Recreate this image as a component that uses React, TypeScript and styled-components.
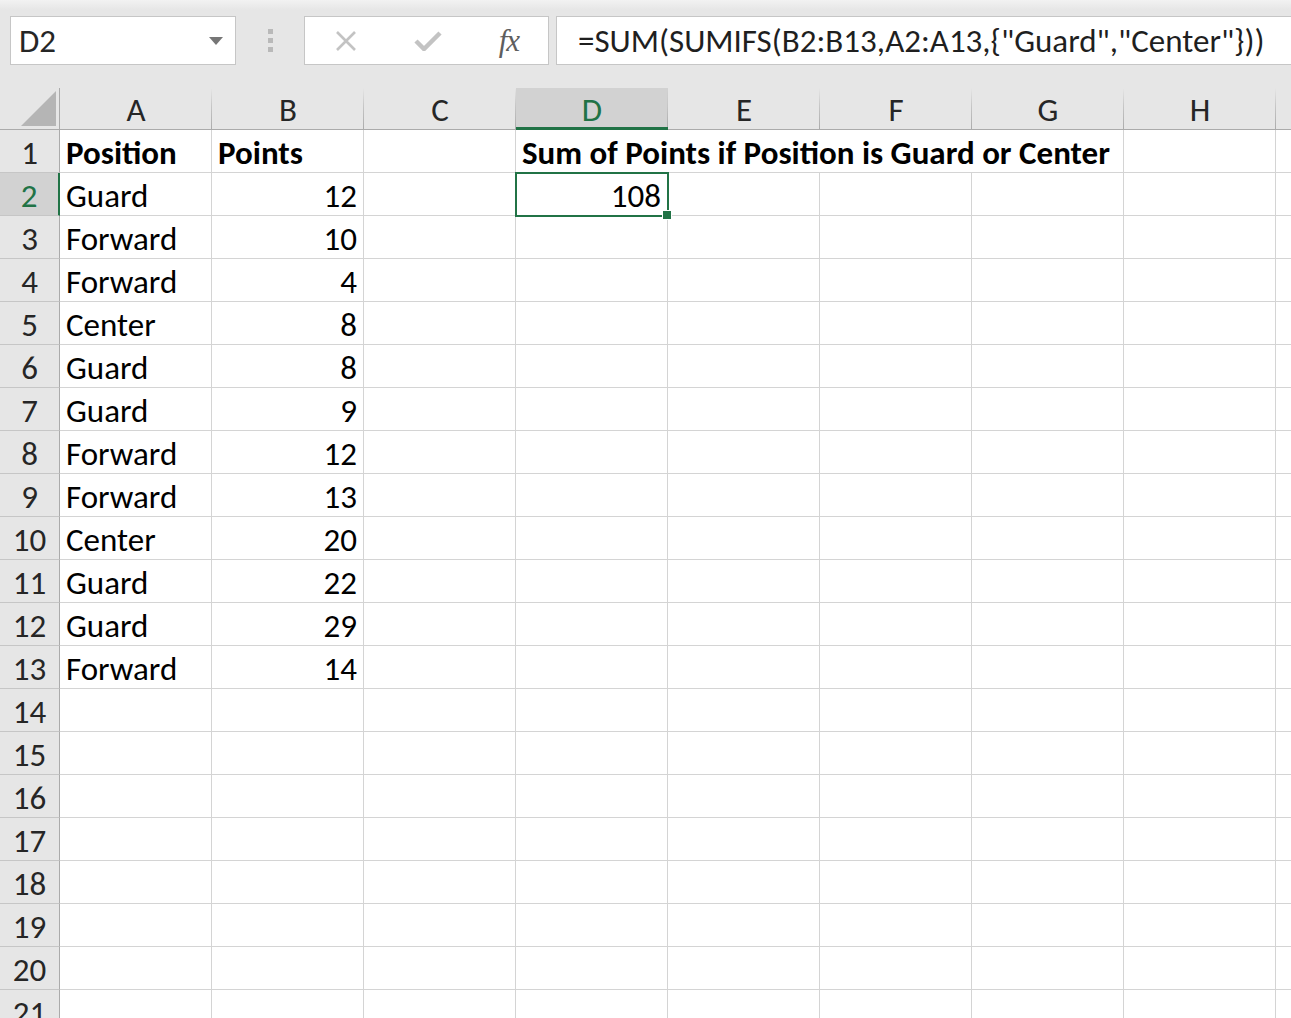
import React from "react";
import styled, { createGlobalStyle, css } from "styled-components";

const GlobalStyle = createGlobalStyle`
  html, body {
    margin: 0;
    padding: 0;
    background: #ffffff;
    overflow: hidden;
  }
  * { box-sizing: border-box; }
`;

const font = `"Carlito", "Lato", "Liberation Sans", sans-serif`;

const Page = styled.div`
  width: 1291px;
  height: 1018px;
  overflow: hidden;
  font-family: ${font};
  background: #e6e6e6;
`;

const FormulaBar = styled.div`
  height: 88px;
  display: flex;
  align-items: flex-start;
  padding: 16px 0 0 10px;
  background: linear-gradient(#f2f2f2 0px, #e6e6e6 10px);
`;

const Box = styled.div`
  height: 49px;
  background: #ffffff;
  border: 1px solid #c6c6c6;
  display: flex;
  align-items: center;
`;

const NameBox = styled(Box)`
  width: 226px;
  padding: 0 12px 0 8px;
  justify-content: space-between;
  font-size: 33px;
  color: #262626;
`;

const Caret = styled.span`
  width: 0;
  height: 0;
  border-left: 7px solid transparent;
  border-right: 7px solid transparent;
  border-top: 8px solid #767676;
`;

const Grip = styled.div`
  width: 68px;
  height: 49px;
  display: flex;
  flex-direction: column;
  align-items: center;
  justify-content: center;
  gap: 4px;
`;

const GripDot = styled.span`
  width: 5px;
  height: 5px;
  background: #b9b9b9;
`;

const ActionBox = styled(Box)`
  width: 245px;
  padding: 0 29px 0 29px;
  justify-content: space-between;
  margin-right: 7px;
`;

const Fx = styled.span`
  font-family: "Liberation Serif", "DejaVu Serif", serif;
  font-style: italic;
  font-size: 31px;
  color: #5e5e5e;
  letter-spacing: -1px;
`;

const FormulaInput = styled(Box)`
  flex: 1;
  border-right: none;
  padding-left: 21px;
  font-size: 33px;
  color: #1f1f1f;
  white-space: nowrap;
`;

const Sheet = styled.div`
  display: grid;
  grid-template-columns: 60px repeat(9, 152px);
  grid-template-rows: 42px repeat(21, 43px);
  background: #ffffff;
`;

const CornerCell = styled.div`
  background: #e6e6e6;
  border-right: 1px solid #ababab;
  border-bottom: 1px solid #ababab;
  display: flex;
  align-items: flex-end;
  justify-content: flex-end;
  padding: 0 3px 3px 0;
`;

const ColHead = styled.div<{ $active?: boolean }>`
  background: ${(p) => (p.$active ? "#d2d2d2" : "#e6e6e6")};
  color: ${(p) => (p.$active ? "#217346" : "#262626")};
  border-bottom: ${(p) => (p.$active ? "3px solid #217346" : "1px solid #ababab")};
  display: flex;
  align-items: center;
  justify-content: center;
  font-size: 33px;
  padding-top: ${(p) => (p.$active ? "4px" : "2px")};
  position: relative;
  &::after {
    content: "";
    position: absolute;
    right: 0;
    top: 0;
    bottom: 0;
    width: 1px;
    background: linear-gradient(transparent 0, #c6c6c6 18px, #ababab 100%);
  }
`;

const RowHead = styled.div<{ $active?: boolean }>`
  background: ${(p) => (p.$active ? "#d2d2d2" : "#e6e6e6")};
  color: ${(p) => (p.$active ? "#217346" : "#262626")};
  border-right: ${(p) => (p.$active ? "2px solid #217346" : "1px solid #ababab")};
  border-bottom: 1px solid #c6c6c6;
  display: flex;
  align-items: center;
  justify-content: center;
  font-size: 33px;
  padding-top: 3px;
`;

const Cell = styled.div<{
  $bold?: boolean;
  $num?: boolean;
  $open?: boolean;
  $active?: boolean;
}>`
  border-right: ${(p) => (p.$open ? "none" : "1px solid #d4d4d4")};
  border-bottom: 1px solid #d4d4d4;
  display: flex;
  align-items: center;
  justify-content: ${(p) => (p.$num ? "flex-end" : "flex-start")};
  padding: 3px 6px 0 6px;
  font-size: 33px;
  font-weight: ${(p) => (p.$bold ? 700 : 400)};
  color: #000000;
  white-space: nowrap;
  overflow: visible;
  position: relative;
  ${(p) =>
    p.$active &&
    css`
      outline: 2px solid #217346;
      outline-offset: -1px;
      z-index: 2;
      &::after {
        content: "";
        position: absolute;
        right: -5px;
        bottom: -5px;
        width: 8px;
        height: 8px;
        background: #217346;
        border: 1px solid #ffffff;
      }
    `}
`;

const XIcon = () => (
  <svg width="24" height="22" viewBox="0 0 24 22">
    <path d="M3 2 L21 20 M21 2 L3 20" stroke="#c3c3c3" strokeWidth="2.6" fill="none" />
  </svg>
);

const CheckIcon = () => (
  <svg width="28" height="20" viewBox="0 0 28 20">
    <path d="M2 10 L10 18 L26 2" stroke="#c3c3c3" strokeWidth="4.5" fill="none" strokeLinejoin="miter" />
  </svg>
);

const CornerTriangle = () => (
  <svg width="35" height="35" viewBox="0 0 35 35">
    <polygon points="35,0 35,35 0,35" fill="#b5b5b5" />
  </svg>
);

const columns = ["A", "B", "C", "D", "E", "F", "G", "H", "I"];

const formula = '=SUM(SUMIFS(B2:B13,A2:A13,{"Guard","Center"}))';

const data: [string, number][] = [
  ["Guard", 12],
  ["Forward", 10],
  ["Forward", 4],
  ["Center", 8],
  ["Guard", 8],
  ["Guard", 9],
  ["Forward", 12],
  ["Forward", 13],
  ["Center", 20],
  ["Guard", 22],
  ["Guard", 29],
  ["Forward", 14],
];

const renderRow = (row: number) => {
  const cells: React.ReactNode[] = [];
  columns.forEach((col, i) => {
    const key = `${col}${row}`;
    if (row === 1) {
      if (col === "A") cells.push(<Cell key={key} $bold>Position</Cell>);
      else if (col === "B") cells.push(<Cell key={key} $bold>Points</Cell>);
      else if (col === "D")
        cells.push(
          <Cell key={key} $bold $open>
            Sum of Points if Position is Guard or Center
          </Cell>
        );
      else cells.push(<Cell key={key} $open={col === "E" || col === "F"} />);
      return;
    }
    const item = data[row - 2];
    if (item && i === 0) cells.push(<Cell key={key}>{item[0]}</Cell>);
    else if (item && i === 1) cells.push(<Cell key={key} $num>{item[1]}</Cell>);
    else if (row === 2 && col === "D")
      cells.push(
        <Cell key={key} $num $active>
          108
        </Cell>
      );
    else cells.push(<Cell key={key} />);
  });
  return cells;
};

export default function App() {
  const rows = Array.from({ length: 21 }, (_, i) => i + 1);
  return (
    <Page>
      <GlobalStyle />
      <FormulaBar>
        <NameBox>
          D2
          <Caret />
        </NameBox>
        <Grip>
          <GripDot />
          <GripDot />
          <GripDot />
        </Grip>
        <ActionBox>
          <XIcon />
          <CheckIcon />
          <Fx>fx</Fx>
        </ActionBox>
        <FormulaInput>{formula}</FormulaInput>
      </FormulaBar>
      <Sheet>
        <CornerCell>
          <CornerTriangle />
        </CornerCell>
        {columns.map((c) => (
          <ColHead key={c} $active={c === "D"}>
            {c}
          </ColHead>
        ))}
        {rows.map((r) => (
          <React.Fragment key={r}>
            <RowHead $active={r === 2}>{r}</RowHead>
            {renderRow(r)}
          </React.Fragment>
        ))}
      </Sheet>
    </Page>
  );
}
